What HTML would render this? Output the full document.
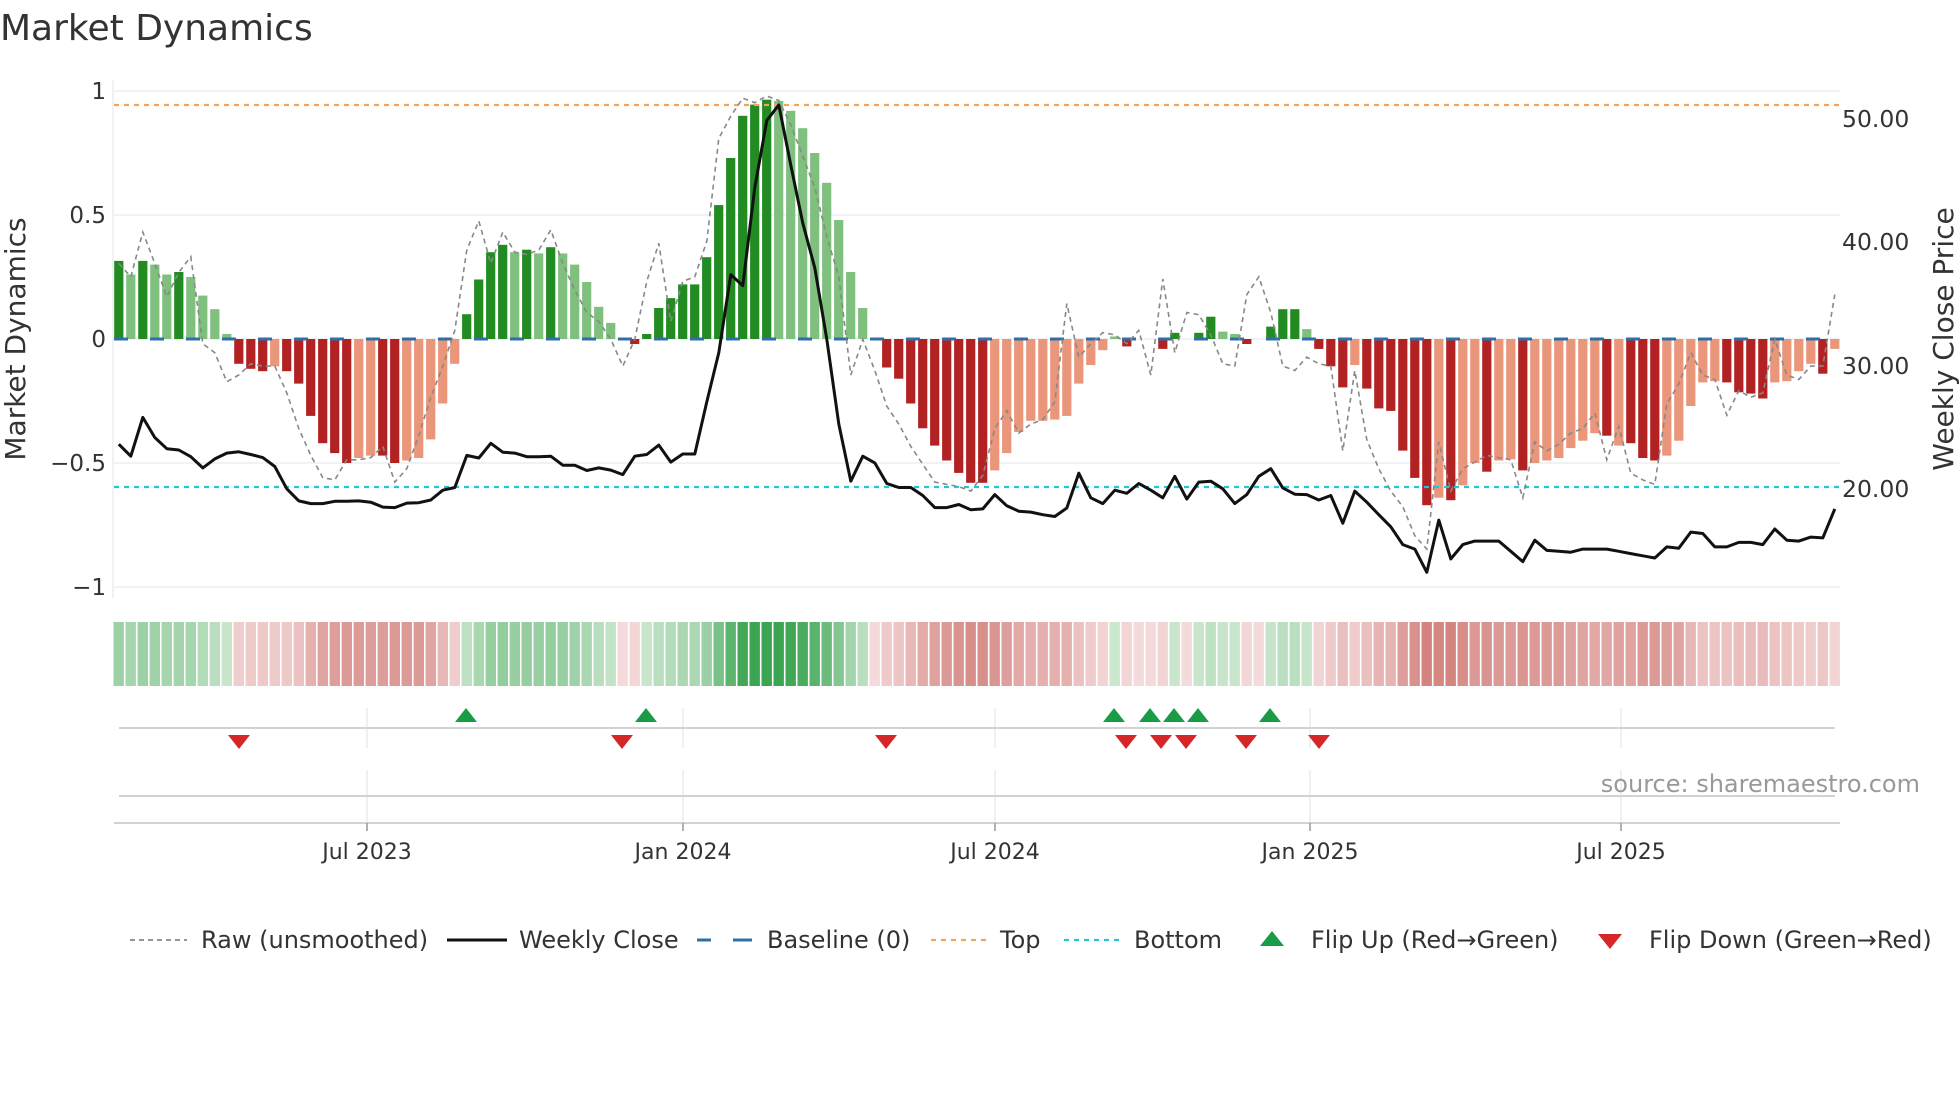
<!DOCTYPE html>
<html><head><meta charset="utf-8"><style>
html,body{margin:0;padding:0;background:#fff;}
svg{display:block;font-family:"DejaVu Sans","Liberation Sans",sans-serif;}
</style></head><body>
<svg id="s" width="1960" height="1102" viewBox="0 0 1960 1102" xmlns="http://www.w3.org/2000/svg">
<rect width="1960" height="1102" fill="#fff"/>
<text x="0" y="40" font-size="36" fill="#333">Market Dynamics</text>
<g stroke="#ebedf0" stroke-width="1.5">
<line x1="114" x2="1840" y1="91" y2="91"/><line x1="114" x2="1840" y1="215" y2="215"/>
<line x1="114" x2="1840" y1="339" y2="339"/><line x1="114" x2="1840" y1="463" y2="463"/>
<line x1="114" x2="1840" y1="587" y2="587"/>
<line x1="113" x2="113" y1="80" y2="598"/>
</g>
<g font-size="23" fill="#333" text-anchor="end">
<text x="106" y="99">1</text><text x="106" y="223">0.5</text><text x="106" y="347">0</text>
<text x="106" y="471">−0.5</text><text x="106" y="595">−1</text>
</g>
<g font-size="23.5" fill="#333">
<text x="1842" y="127">50.00</text><text x="1842" y="250">40.00</text>
<text x="1842" y="374">30.00</text><text x="1842" y="497">20.00</text>
</g>
<text transform="translate(25,339) rotate(-90)" font-size="28" fill="#333" text-anchor="middle">Market Dynamics</text>
<text transform="translate(1953,339) rotate(-90)" font-size="28" fill="#333" text-anchor="middle">Weekly Close Price</text>
<g id="bars"></g>
<line x1="114" x2="1840" y1="105" y2="105" stroke="#f0a55e" stroke-width="2.2" stroke-dasharray="5,5"/>
<line x1="114" x2="1840" y1="487" y2="487" stroke="#27c4d6" stroke-width="2.2" stroke-dasharray="5,5"/>
<line x1="114" x2="1840" y1="339" y2="339" stroke="#2f6fa8" stroke-width="3" stroke-dasharray="14,22"/>
<polyline id="raw" fill="none" stroke="#888" stroke-width="1.6" stroke-dasharray="5,4"/>
<polyline id="close" fill="none" stroke="#111" stroke-width="3" stroke-linejoin="round"/>
<g id="strip"></g>
<g stroke="#e6e6e6" stroke-width="1.2">
<line x1="367" x2="367" y1="708" y2="748"/><line x1="683" x2="683" y1="708" y2="748"/>
<line x1="995" x2="995" y1="708" y2="748"/><line x1="1310" x2="1310" y1="708" y2="748"/><line x1="1621" x2="1621" y1="708" y2="748"/>
<line x1="367" x2="367" y1="770" y2="822"/><line x1="683" x2="683" y1="770" y2="822"/>
<line x1="995" x2="995" y1="770" y2="822"/><line x1="1310" x2="1310" y1="770" y2="822"/><line x1="1621" x2="1621" y1="770" y2="822"/>
</g>
<line x1="119" x2="1835" y1="728" y2="728" stroke="#d2d2d2" stroke-width="2"/>
<line x1="119" x2="1835" y1="796" y2="796" stroke="#d2d2d2" stroke-width="2"/>
<line x1="114" x2="1840" y1="823" y2="823" stroke="#d2d2d2" stroke-width="2"/>
<g stroke="#999" stroke-width="1.5">
<line x1="367" x2="367" y1="823" y2="831"/><line x1="683" x2="683" y1="823" y2="831"/>
<line x1="995" x2="995" y1="823" y2="831"/><line x1="1310" x2="1310" y1="823" y2="831"/><line x1="1621" x2="1621" y1="823" y2="831"/>
</g>
<g font-size="22" fill="#333" text-anchor="middle">
<text x="367" y="859">Jul 2023</text><text x="683" y="859">Jan 2024</text><text x="995" y="859">Jul 2024</text>
<text x="1310" y="859">Jan 2025</text><text x="1621" y="859">Jul 2025</text>
</g>
<text x="1920" y="792" font-size="24" fill="#999" text-anchor="end">source: sharemaestro.com</text>
<g id="marks"></g>
<g font-size="24" fill="#333">
<line x1="130" x2="187" y1="940" y2="940" stroke="#888" stroke-width="1.8" stroke-dasharray="5,4"/>
<text x="201" y="948">Raw (unsmoothed)</text>
<line x1="447" x2="507" y1="940" y2="940" stroke="#111" stroke-width="3"/>
<text x="519" y="948">Weekly Close</text>
<line x1="697" x2="752" y1="940" y2="940" stroke="#2f6fa8" stroke-width="3" stroke-dasharray="14,22"/>
<line x1="736" x2="752" y1="940" y2="940" stroke="#2f6fa8" stroke-width="3"/>
<text x="767" y="948">Baseline (0)</text>
<line x1="931" x2="987" y1="940" y2="940" stroke="#f0a55e" stroke-width="2.2" stroke-dasharray="5,5"/>
<text x="1000" y="948">Top</text>
<line x1="1064" x2="1120" y1="940" y2="940" stroke="#27c4d6" stroke-width="2.2" stroke-dasharray="5,5"/>
<text x="1134" y="948">Bottom</text>
<polygon points="1260,946 1284,946 1272,931" fill="#1a9c46"/>
<text x="1311" y="948">Flip Up (Red→Green)</text>
<polygon points="1598,934 1622,934 1610,949" fill="#d62728"/>
<text x="1649" y="948">Flip Down (Green→Red)</text>
</g>
</svg>
<script>
var V=[[.315,1],[.26,0],[.315,1],[.30,0],[.26,0],[.27,1],[.25,0],[.175,0],[.12,0],[.02,0],
[-.10,1],[-.12,1],[-.13,1],[-.11,0],[-.13,1],[-.18,1],[-.31,1],[-.42,1],[-.46,1],[-.50,1],
[-.48,0],[-.47,0],[-.47,1],[-.50,1],[-.49,0],[-.48,0],[-.405,0],[-.26,0],[-.10,0],[.10,1],
[.24,1],[.35,1],[.38,1],[.35,0],[.36,1],[.345,0],[.37,1],[.345,0],[.30,0],[.23,0],
[.13,0],[.065,0],[0,0],[-.02,1],[.02,1],[.125,1],[.165,1],[.22,1],[.22,1],[.33,1],
[.54,1],[.73,1],[.90,1],[.945,1],[.965,1],[.96,0],[.92,0],[.85,0],[.75,0],[.63,0],
[.48,0],[.27,0],[.125,0],[0,0],[-.115,1],[-.16,1],[-.26,1],[-.36,1],[-.43,1],[-.49,1],
[-.54,1],[-.58,1],[-.58,1],[-.53,0],[-.46,0],[-.375,0],[-.33,0],[-.33,0],[-.325,0],[-.31,0],
[-.18,0],[-.105,0],[-.045,0],[.01,0],[-.03,1],[0,0],[0,0],[-.04,1],[.025,1],[0,0],
[.025,1],[.09,1],[.03,0],[.02,0],[-.02,1],[0,0],[.05,1],[.12,1],[.12,1],[.04,0],
[-.04,1],[-.11,1],[-.195,1],[-.105,0],[-.2,1],[-.28,1],[-.29,1],[-.45,1],[-.56,1],[-.67,1],
[-.64,0],[-.65,1],[-.59,0],[-.5,0],[-.535,1],[-.49,0],[-.485,0],[-.53,1],[-.5,0],[-.49,0],
[-.48,0],[-.44,0],[-.41,0],[-.38,0],[-.39,1],[-.43,0],[-.42,1],[-.48,1],[-.49,1],[-.47,0],
[-.41,0],[-.27,0],[-.175,0],[-.17,0],[-.175,1],[-.215,1],[-.22,1],[-.24,1],[-.175,0],[-.17,0],
[-.13,0],[-.10,0],[-.14,1],[-.04,0]];
var C=[995,1022,935,980,1005,1008,1023,1048,1028,1015,1012,1018,1025,1045,1095,1122,1128,1128,1123,1123,
1122,1125,1136,1137,1127,1126,1120,1098,1092,1020,1026,993,1013,1015,1023,1023,1022,1042,1042,1054,
1048,1053,1063,1022,1018,997,1035,1017,1017,900,790,615,640,420,270,235,370,500,600,760,
950,1078,1022,1037,1083,1092,1092,1110,1137,1137,1130,1142,
1140,1108,1133,1145,1147,1153,1157,1138,1060,1115,1128,1098,1105,1083,1098,1115,1067,1118,1080,1078,
1095,1128,1108,1067,1050,1093,1107,1108,1120,1110,1172,1100,1125,1153,1180,1220,1230,1282,1165,1252,
1220,1212,1212,1212,1235,1258,1210,1233,1235,1237,1230,1230,1230,1235,1240,1245,1250,1225,1228,1192,
1195,1225,1225,1215,1215,1220,1185,1210,1212,1203,1205,1140];
var R=[590,620,520,590,665,610,575,770,790,855,840,815,820,820,880,960,1020,1070,1075,1030,
1030,1025,1000,1080,1050,975,890,820,740,560,495,590,520,565,570,560,515,590,650,700,
720,760,820,760,630,545,720,630,620,540,310,260,220,230,215,225,280,350,420,530,
620,840,760,830,910,950,1000,1040,1080,1085,1090,1100,
1065,960,920,970,950,940,900,680,800,770,745,750,770,740,840,625,790,700,705,750,
815,820,660,620,700,820,830,800,815,820,1010,830,985,1050,1100,1135,1200,1230,990,1100,
1050,1035,1020,1025,1030,1115,990,1010,995,970,960,925,1030,955,1060,1075,1085,905,860,790,
840,850,930,875,890,880,760,840,850,820,820,660];
var NS="http://www.w3.org/2000/svg";
function el(t,a,p){var e=document.createElementNS(NS,t);for(var k in a)e.setAttribute(k,a[k]);p.appendChild(e);return e;}
var bars=document.getElementById("bars"),strip=document.getElementById("strip"),marks=document.getElementById("marks");
var x0=118.75,dx=12.0,cp=[],rp=[];
for(var i=0;i<V.length;i++){
 var v=V[i][0],d=V[i][1],x=x0+i*dx,h=Math.abs(v)*248;
 var col=v>=0?(d?"#228b22":"#7fc07f"):(d?"#b22222":"#e9967a");
 if(h>0.5)el("rect",{x:(x-4.6).toFixed(1),y:(v>=0?339-h:339).toFixed(1),width:9.2,height:h.toFixed(1),fill:col},bars);
 var t,r,g,b;
 if(v>0.005){t=Math.min(1,v/0.95);r=205-145*t;g=232-67*t;b=208-126*t;}
 else{t=Math.min(1,Math.abs(v)/0.68);r=244-32*t;g=218-88*t;b=218-93*t;}
 el("rect",{x:(x-5.2).toFixed(1),y:622,width:10.4,height:64,fill:"rgb("+(r|0)+","+(g|0)+","+(b|0)+")"},strip);
 cp.push(x.toFixed(1)+","+(C[i]/2.24).toFixed(1));
 rp.push(x.toFixed(1)+","+(R[i]/2.24).toFixed(1));
}
document.getElementById("close").setAttribute("points",cp.join(" "));
document.getElementById("raw").setAttribute("points",rp.join(" "));
[466,646,1114,1150,1174,1198,1270].forEach(function(x){el("polygon",{points:(x-11)+",722 "+(x+11)+",722 "+x+",708",fill:"#1a9c46"},marks);});
[239,622,886,1126,1161,1186,1246,1319].forEach(function(x){el("polygon",{points:(x-11)+",735 "+(x+11)+",735 "+x+",749",fill:"#d62728"},marks);});
</script>
</body></html>
